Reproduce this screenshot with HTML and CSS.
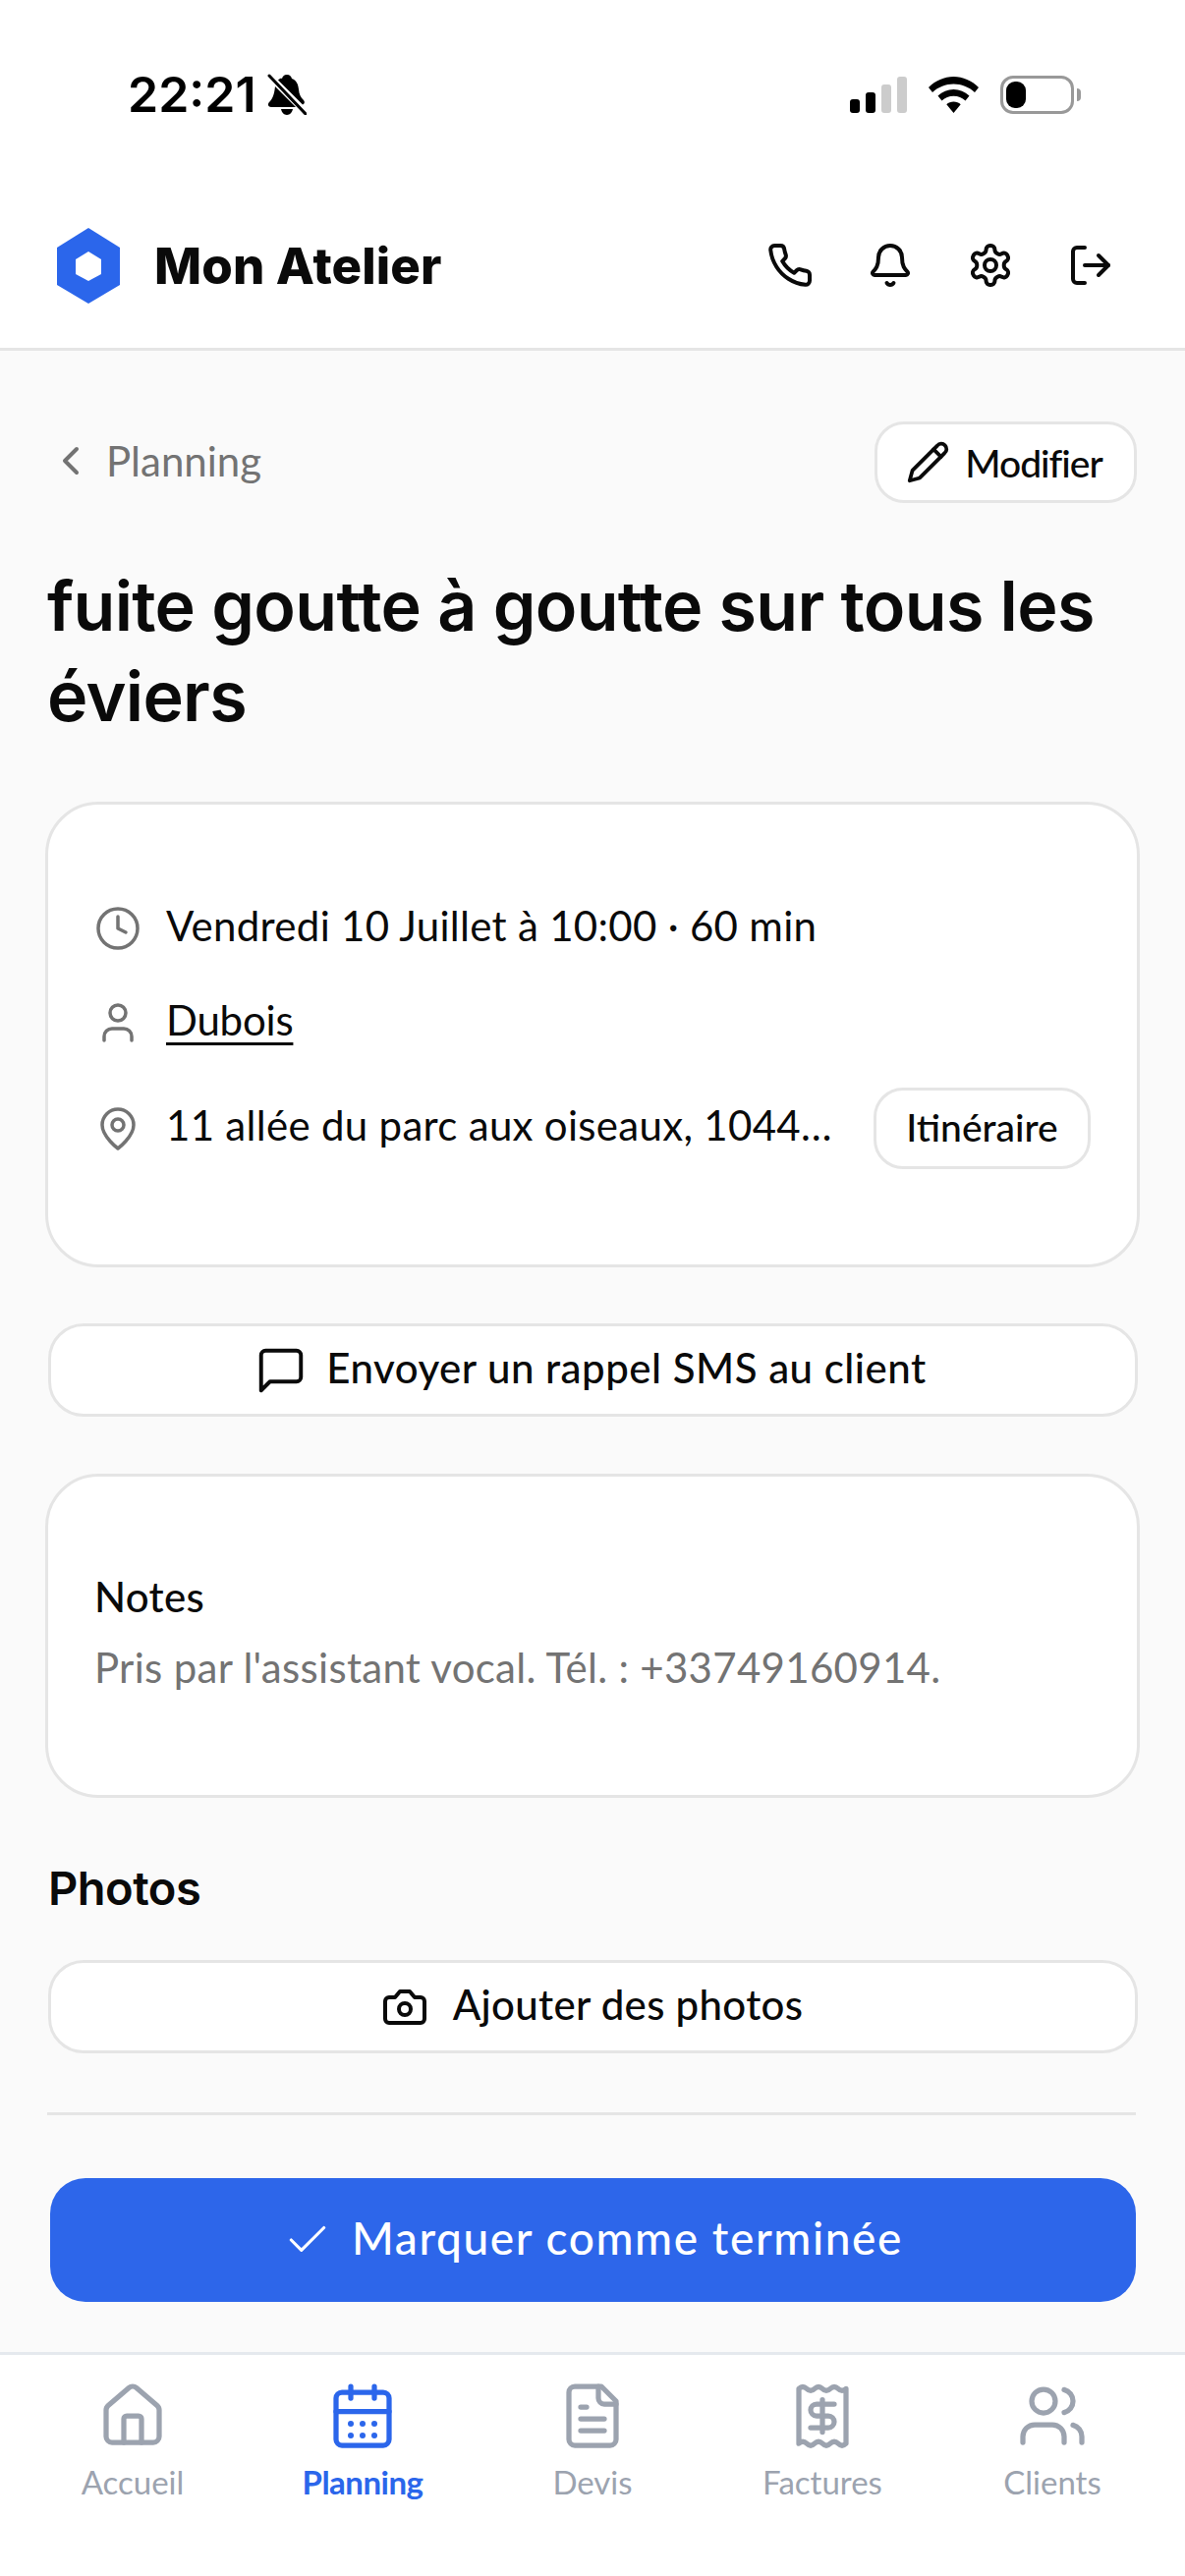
FILE: index.html
```html
<!DOCTYPE html>
<html lang="fr">
<head>
<meta charset="UTF-8" />
<title>Mon Atelier</title>
<link rel="stylesheet" href="styles.css">
</head>
<body>
<div class="app">

  <div class="status-bar">
    <div class="status-left">
      <span class="time">22:21</span>
      <svg class="silent" viewBox="0 0 40 42">
        <path d="M20 1c3 0 4.500 2 5 4 5 2 6.500 6 7 11 .4 5 2 8 5 11 1.500 1.500 1 4-1 4.500L11 6.500C12.500 5 14 4.500 15 5c.5-2 2-4 5-4z"/>
        <path d="M8 13 29 34H4c-3 0-4-3-2-5 3-3 5-7 6-16zM14 36h12c-.5 3-3 6-6 6s-5.500-3-6-6z"/>
        <path class="silent-line" d="M2 2 39 41"/>
      </svg>
    </div>
    <div class="status-right">
      <svg class="signal" viewBox="0 0 58 37">
        <rect x="0" y="23" width="10" height="14" rx="3"/>
        <rect x="16" y="16" width="10" height="21" rx="3"/>
        <rect class="bar-off" x="32" y="8" width="10" height="29" rx="3"/>
        <rect class="bar-off" x="48" y="0" width="10" height="37" rx="3"/>
      </svg>
      <svg class="wifi" viewBox="0 0 51 37">
        <path d="M25.500 0C35 0 44 4 51 11l-4 5C41 10.500 33.500 7.500 25.500 7.500S10 10.500 4 16l-4-5C7 4 16 0 25.500 0z"/>
        <path d="M25.500 13c6 0 11.500 2.300 16 6.500l-4 5c-3.200-3-7.500-4.700-12-4.700s-8.800 1.700-12 4.700l-4-5c4.500-4.200 10-6.500 16-6.500z"/>
        <path d="M25.500 25.500c2.800 0 5.300 1 7.200 2.800L25.500 37l-7.200-8.700c1.900-1.800 4.400-2.800 7.200-2.800z"/>
      </svg>
      <div class="battery">
        <div class="battery-body"><div class="battery-level"></div></div>
        <div class="battery-nub"></div>
      </div>
    </div>
  </div>

  <header class="topnav">
    <div class="brand">
      <svg class="logo" viewBox="0 0 64 77">
        <polygon fill="#2b66eb" points="32,0 64,20 64,58 32,77 0,58 0,20"/>
        <polygon fill="#fff" points="32,24 45,32 45,47 32,54 19,47 19,32"/>
      </svg>
      <span class="brand-name">Mon Atelier</span>
    </div>
    <nav class="topnav-actions">
      <svg class="ico ico-48" viewBox="0 0 24 24"><path d="M22 16.920v3a2 2 0 0 1-2.180 2 19.790 19.790 0 0 1-8.630-3.070 19.500 19.500 0 0 1-6-6 19.790 19.790 0 0 1-3.070-8.670A2 2 0 0 1 4.110 2h3a2 2 0 0 1 2 1.720 12.840 12.840 0 0 0 .7 2.810 2 2 0 0 1-.45 2.110L8.090 9.910a16 16 0 0 0 6 6l1.270-1.270a2 2 0 0 1 2.110-.45 12.840 12.840 0 0 0 2.810.7A2 2 0 0 1 22 16.920z"/></svg>
      <svg class="ico ico-48" viewBox="0 0 24 24"><path d="M10.268 21a2 2 0 0 0 3.464 0"/><path d="M3.262 15.326A1 1 0 0 0 4 17h16a1 1 0 0 0 .74-1.673C19.410 13.956 18 12.499 18 8A6 6 0 0 0 6 8c0 4.499-1.411 5.956-2.738 7.326"/></svg>
      <svg class="ico ico-48" viewBox="0 0 24 24"><path d="M12.220 2h-.44a2 2 0 0 0-2 2v.18a2 2 0 0 1-1 1.730l-.43.25a2 2 0 0 1-2 0l-.15-.08a2 2 0 0 0-2.730.73l-.22.38a2 2 0 0 0 .73 2.730l.15.1a2 2 0 0 1 1 1.720v.51a2 2 0 0 1-1 1.740l-.15.09a2 2 0 0 0-.73 2.730l.22.38a2 2 0 0 0 2.730.73l.15-.08a2 2 0 0 1 2 0l.43.25a2 2 0 0 1 1 1.730V20a2 2 0 0 0 2 2h.44a2 2 0 0 0 2-2v-.18a2 2 0 0 1 1-1.730l.43-.25a2 2 0 0 1 2 0l.15.08a2 2 0 0 0 2.730-.73l.22-.39a2 2 0 0 0-.73-2.730l-.15-.08a2 2 0 0 1-1-1.740v-.5a2 2 0 0 1 1-1.740l.15-.09a2 2 0 0 0 .73-2.730l-.22-.38a2 2 0 0 0-2.730-.73l-.15.08a2 2 0 0 1-2 0l-.43-.25a2 2 0 0 1-1-1.730V4a2 2 0 0 0-2-2z"/><circle cx="12" cy="12" r="3"/></svg>
      <svg class="ico ico-48" viewBox="0 0 24 24"><path d="M9 21H5a2 2 0 0 1-2-2V5a2 2 0 0 1 2-2h4"/><path d="m16 17 5-5-5-5"/><path d="M21 12H9"/></svg>
    </nav>
  </header>

  <main class="content">
    <div class="page-head">
      <a class="back">
        <svg class="ico ico-back" viewBox="0 0 24 24"><path d="m15 18-6-6 6-6"/></svg>
        <span>Planning</span>
      </a>
      <button class="pill pill-edit">
        <svg class="ico ico-45" viewBox="0 0 24 24"><path d="M17 3a2.850 2.830 0 1 1 4 4L7.500 20.500 2 22l1.500-5.500Z"/><path d="m15 5 4 4"/></svg>
        Modifier
      </button>
    </div>

    <h1 class="title">fuite goutte à goutte sur tous les éviers</h1>

    <section class="card card-info">
      <div class="info-row">
        <svg class="ico ico-48 ico-grey" viewBox="0 0 24 24"><circle cx="12" cy="12" r="10"/><path d="M12 6v6l4 2"/></svg>
        <span class="info-text">Vendredi 10 Juillet à 10:00 · 60 min</span>
      </div>
      <div class="info-row">
        <svg class="ico ico-48 ico-grey" viewBox="0 0 24 24"><path d="M19 21v-2a4 4 0 0 0-4-4H9a4 4 0 0 0-4 4v2"/><circle cx="12" cy="7" r="4"/></svg>
        <a class="info-text info-link">Dubois</a>
      </div>
      <div class="info-row info-row-addr">
        <svg class="ico ico-48 ico-grey" viewBox="0 0 24 24"><path d="M20 10c0 6-8 12-8 12s-8-6-8-12a8 8 0 0 1 16 0Z"/><circle cx="12" cy="10" r="3"/></svg>
        <span class="info-text info-addr">11 allée du parc aux oiseaux, 1044…</span>
        <button class="pill pill-route">Itinéraire</button>
      </div>
    </section>

    <button class="wide-btn wide-sms">
      <svg class="ico ico-54" viewBox="0 0 24 24"><path d="M21 15a2 2 0 0 1-2 2H7l-4 4V5a2 2 0 0 1 2-2h14a2 2 0 0 1 2 2z"/></svg>
      <span class="btn-label">Envoyer un rappel SMS au client</span>
    </button>

    <section class="card card-notes">
      <h2 class="notes-title">Notes</h2>
      <p class="notes-text">Pris par l'assistant vocal. Tél. : +33749160914.</p>
    </section>

    <h2 class="photos-title">Photos</h2>
    <button class="wide-btn wide-photos">
      <svg class="ico ico-48" viewBox="0 0 24 24"><path d="M14.500 4h-5L7 7H4a2 2 0 0 0-2 2v9a2 2 0 0 0 2 2h16a2 2 0 0 0 2-2V9a2 2 0 0 0-2-2h-3l-2.500-3z"/><circle cx="12" cy="13" r="3"/></svg>
      <span class="btn-label">Ajouter des photos</span>
    </button>

    <hr class="divider">

    <button class="done-btn">
      <svg class="ico ico-check" viewBox="0 0 24 24"><path d="M20 6 9 17l-5-5"/></svg>
      <span class="btn-label">Marquer comme terminée</span>
    </button>
  </main>

  <footer class="tabbar">
    <a class="tab">
      <svg class="ico tab-ico" viewBox="0 0 24 24"><path d="M15 21v-8a1 1 0 0 0-1-1h-4a1 1 0 0 0-1 1v8"/><path d="M3 10a2 2 0 0 1 .709-1.528l7-5.999a2 2 0 0 1 2.582 0l7 5.999A2 2 0 0 1 21 10v9a2 2 0 0 1-2 2H5a2 2 0 0 1-2-2z"/></svg>
      <span>Accueil</span>
    </a>
    <a class="tab tab-active">
      <svg class="ico tab-ico" viewBox="0 0 24 24"><rect x="3" y="4" width="18" height="18" rx="2"/><path d="M8 2v4M16 2v4M3 10.500h18"/><g class="dots"><circle cx="8" cy="14.700" r="1"/><circle cx="12" cy="14.700" r="1"/><circle cx="16" cy="14.700" r="1"/><circle cx="8" cy="18.700" r="1"/><circle cx="12" cy="18.700" r="1"/><circle cx="16" cy="18.700" r="1"/></g></svg>
      <span>Planning</span>
    </a>
    <a class="tab">
      <svg class="ico tab-ico" viewBox="0 0 24 24"><path d="M15 2H6a2 2 0 0 0-2 2v16a2 2 0 0 0 2 2h12a2 2 0 0 0 2-2V7Z"/><path d="M14 2v4a2 2 0 0 0 2 2h4"/><path d="M10 9H8"/><path d="M16 13H8"/><path d="M16 17H8"/></svg>
      <span>Devis</span>
    </a>
    <a class="tab">
      <svg class="ico tab-ico" viewBox="0 0 24 24"><path d="M4 2.800V21.400q1.330-1.300 2.670 0t2.670 0 2.660 0 2.670 0 2.670 0 2.660 0V2.800q-1.330 1.300-2.660 0t-2.670 0-2.670 0-2.660 0-2.670 0-2.670 0Z"/><path d="M16 8h-6a2 2 0 1 0 0 4h4a2 2 0 1 1 0 4H8"/><path d="M12 17.500v-11"/></svg>
      <span>Factures</span>
    </a>
    <a class="tab">
      <svg class="ico tab-ico" viewBox="0 0 24 24"><path d="M16 21v-2a4 4 0 0 0-4-4H6a4 4 0 0 0-4 4v2"/><circle cx="9" cy="7" r="4"/><path d="M22 21v-2a4 4 0 0 0-3-3.870"/><path d="M16 3.130a4 4 0 0 1 0 7.750"/></svg>
      <span>Clients</span>
    </a>
  </footer>

</div>
</body>
</html>
```

FILE: styles.css
```css
* { box-sizing: border-box; }
body { margin: 0; background: #fff; font-family: "Lato", "Liberation Sans", sans-serif; color: #0a0a0a; }
h1, h2, p { margin: 0; }
button { font-family: inherit; color: inherit; cursor: pointer; }

.app {
  width: 1206px;
  height: 2622px;
  display: flex;
  flex-direction: column;
  overflow: hidden;
}

/* icons */
.ico {
  flex: none;
  fill: none;
  stroke: currentColor;
  stroke-width: 2;
  stroke-linecap: round;
  stroke-linejoin: round;
}
.ico-48 { width: 48px; height: 48px; }
.ico-45 { width: 45px; height: 45px; }
.ico-54 { width: 54px; height: 54px; stroke-width: 1.75; }
.ico-grey { color: #737373; stroke-width: 1.75; }
.ico-back { width: 48px; height: 48px; color: #737373; }
.ico-check { width: 50px; height: 50px; stroke-width: 1.5; }

/* status bar */
.status-bar {
  height: 186px;
  padding: 68px 106px 0 130px;
  display: flex;
  justify-content: space-between;
  align-items: flex-start;
  background: #fff;
  color: #000;
}
.status-left { display: flex; align-items: center; gap: 11px; height: 56px; }
.time { font-family: "Inter", sans-serif; font-size: 50px; font-weight: 600; line-height: 56px; }
.silent { width: 40px; height: 42px; }
.silent-line { stroke: #000; stroke-width: 3; stroke-linecap: round; fill: none; }
.silent path:nth-child(2) { fill: #000; }
.status-right { display: flex; align-items: center; gap: 22px; height: 56px; }
.signal { width: 58px; height: 37px; }
.bar-off { fill: #ccc; }
.wifi { width: 51px; height: 37px; }
.battery { display: flex; align-items: center; gap: 3px; }
.battery-body {
  width: 75px;
  height: 39px;
  border: 3px solid #999;
  border-radius: 13px;
  padding: 3px;
}
.battery-level { width: 20px; height: 100%; background: #000; border-radius: 9px; }
.battery-nub { width: 4px; height: 13px; background: #999; border-radius: 0 4px 4px 0; }

/* header */
.topnav {
  height: 171px;
  padding: 0 72px 0 58px;
  display: flex;
  justify-content: space-between;
  align-items: center;
  background: #fff;
  border-bottom: 3px solid #e5e5e5;
}
.brand { display: flex; align-items: center; gap: 35px; }
.logo { width: 64px; height: 77px; }
.brand-name { font-family: "Inter", sans-serif; font-size: 51px; font-weight: 800; letter-spacing: 0.100px; }
.topnav-actions { display: flex; gap: 54px; color: #0a0a0a; }

/* page */
.content {
  flex: 1;
  padding: 72px 46px 0;
  background: #fafafa;
}
.page-head { display: flex; justify-content: space-between; align-items: center; padding: 0 3px 0 2px; }
.back { display: flex; align-items: center; gap: 12px; color: #737373; font-size: 42px; padding-bottom: 3px; }
.title {
  margin: 59px 0 61px 2px;
  font-family: "Inter", sans-serif;
  font-size: 70px;
  font-weight: 600;
  line-height: 92px;
  letter-spacing: -0.700px;
}

.pill {
  height: 83px;
  background: #fff;
  border: 3px solid #e5e5e5;
  border-radius: 30px;
  font-size: 39px;
  font-weight: 500;
  display: inline-flex;
  align-items: center;
  justify-content: center;
  padding: 0;
}
.pill-edit { width: 267px; gap: 15px; padding-right: 3px; letter-spacing: -1px; }
.pill-route { width: 221px; flex: none; margin-left: auto; padding-bottom: 4px; }

.card {
  background: #fff;
  border: 3px solid #e5e5e5;
  border-radius: 54px;
}
.card-info {
  padding: 96px 47px 97px 47px;
  display: flex;
  flex-direction: column;
  gap: 36px;
}
.info-row { display: flex; align-items: center; gap: 25px; height: 60px; font-size: 42px; }
.info-row-addr { height: 83px; }
.info-text { letter-spacing: 0.300px; padding-bottom: 7px; }
.info-link { text-decoration: underline; text-underline-offset: 7px; text-decoration-thickness: 3px; letter-spacing: -0.200px; }

.wide-btn {
  display: flex;
  align-items: center;
  justify-content: center;
  gap: 19px;
  width: 1109px;
  height: 95px;
  margin-left: 3px;
  padding: 0 5px 0 0;
  background: #fff;
  border: 3px solid #e5e5e5;
  border-radius: 36px;
  font-size: 42px;
  font-weight: 500;
}
.btn-label { padding-bottom: 5px; letter-spacing: 0.500px; }
.wide-sms { margin-top: 57px; margin-bottom: 58px; }
.wide-photos { gap: 25px; padding: 0 2px 0 0; }
.wide-photos .btn-label { letter-spacing: 0.300px; }

.card-notes { padding: 92px 47px 100px; }
.notes-title { font-size: 42px; font-weight: 500; line-height: 60px; margin-bottom: 12px; letter-spacing: 0.300px; }
.notes-text { font-size: 42px; line-height: 60px; color: #737373; letter-spacing: 0.300px; }

.photos-title {
  margin: 62px 0 43px 3px;
  font-family: "Inter", sans-serif;
  font-size: 47px;
  font-weight: 600;
  line-height: 60px;
  letter-spacing: -0.500px;
}

.divider { height: 3px; margin: 60px 4px 64px 2px; border: 0; background: #e5e5e5; }

.done-btn {
  display: flex;
  align-items: center;
  justify-content: center;
  gap: 20px;
  width: 1105px;
  height: 126px;
  margin-left: 5px;
  background: #2d66ea;
  color: #fff;
  border: 0;
  border-radius: 36px;
  font-size: 46px;
  font-weight: 500;
}
.done-btn .btn-label { letter-spacing: 1.600px; }

/* bottom tabs */
.tabbar {
  height: 228px;
  padding: 26px 18px 0;
  display: flex;
  align-items: flex-start;
  background: #fff;
  border-top: 3px solid #e5e9ee;
}
.tab {
  flex: 1;
  display: flex;
  flex-direction: column;
  align-items: center;
  gap: 10px;
  color: #9ca3af;
  font-size: 33px;
  line-height: 42px;
}
.tab-ico { width: 72px; height: 72px; stroke-width: 1.75; }
.tab-active { color: #2b66eb; font-weight: 700; letter-spacing: -0.500px; }
.dots circle { fill: currentColor; stroke: none; }
```
